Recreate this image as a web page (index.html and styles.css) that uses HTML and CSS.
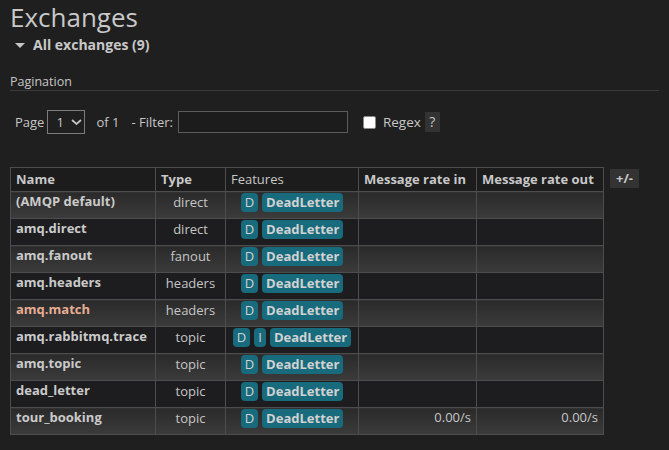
FILE: index.html
```html
<!DOCTYPE html>
<html>
<head>
<meta charset="utf-8">
<link rel="stylesheet" href="styles.css">
</head>
<body>
<div class="page">
  <h1 class="title">Exchanges</h1>
  <div class="section-head"><span class="tri"></span><span>All exchanges (9)</span></div>
  <h3 class="pag-label">Pagination</h3>
  <div class="pager">
    <span>Page</span>
    <div class="select"><span>1</span><svg class="chev" width="11" height="6" viewBox="0 0 11 6"><polyline points="1,1 5.5,5 10,1" fill="none" stroke="#c6c6c6" stroke-width="1.7"/></svg></div>
    <span class="of">of 1</span>
    <span class="filter-label">- Filter:</span>
    <span class="input"></span>
    <span class="checkbox"></span>
    <span class="regex">Regex</span>
    <span class="help">?</span>
  </div>
  <div class="table-wrap">
    <table class="list">
      <colgroup><col class="c-name"><col class="c-type"><col class="c-feat"><col class="c-in"><col class="c-out"></colgroup>
      <thead>
        <tr><th class="l">Name</th><th class="l">Type</th><th class="l plain">Features</th><th class="l">Message rate in</th><th class="l">Message rate out</th></tr>
      </thead>
      <tbody>
        <tr class="alt1"><td class="name">(AMQP default)</td><td class="c">direct</td><td class="c"><span class="feats"><span class="badge">D</span><span class="badge b">DeadLetter</span></span></td><td></td><td></td></tr>
        <tr class="alt2"><td class="name">amq.direct</td><td class="c">direct</td><td class="c"><span class="feats"><span class="badge">D</span><span class="badge b">DeadLetter</span></span></td><td></td><td></td></tr>
        <tr class="alt1"><td class="name">amq.fanout</td><td class="c">fanout</td><td class="c"><span class="feats"><span class="badge">D</span><span class="badge b">DeadLetter</span></span></td><td></td><td></td></tr>
        <tr class="alt2"><td class="name">amq.headers</td><td class="c">headers</td><td class="c"><span class="feats"><span class="badge">D</span><span class="badge b">DeadLetter</span></span></td><td></td><td></td></tr>
        <tr class="alt1"><td class="name hl">amq.match</td><td class="c">headers</td><td class="c"><span class="feats"><span class="badge">D</span><span class="badge b">DeadLetter</span></span></td><td></td><td></td></tr>
        <tr class="alt2"><td class="name">amq.rabbitmq.trace</td><td class="c">topic</td><td class="c"><span class="feats"><span class="badge">D</span><span class="badge">I</span><span class="badge b">DeadLetter</span></span></td><td></td><td></td></tr>
        <tr class="alt1"><td class="name">amq.topic</td><td class="c">topic</td><td class="c"><span class="feats"><span class="badge">D</span><span class="badge b">DeadLetter</span></span></td><td></td><td></td></tr>
        <tr class="alt2"><td class="name">dead_letter</td><td class="c">topic</td><td class="c"><span class="feats"><span class="badge">D</span><span class="badge b">DeadLetter</span></span></td><td></td><td></td></tr>
        <tr class="alt1"><td class="name">tour_booking</td><td class="c">topic</td><td class="c"><span class="feats"><span class="badge">D</span><span class="badge b">DeadLetter</span></span></td><td class="r">0.00/s</td><td class="r">0.00/s</td></tr>
      </tbody>
    </table>
    <span class="toggle">+/-</span>
  </div>
</div>
</body>
</html>
```

FILE: styles.css
```css
html, body {
  margin: 0;
  padding: 0;
  background: #1f1f1f;
  color: #c6c6c6;
  font-family: "Open Sans", "DejaVu Sans", sans-serif;
  font-size: 13px;
}

.page {
  padding: 2px 10px 0 10px;
}

.title {
  margin: 0;
  font-size: 26px;
  line-height: 30px;
  font-weight: 400;
  color: #c8c8c8;
}

.section-head {
  margin-top: 4px;
  height: 18px;
  line-height: 18px;
  display: flex;
  align-items: center;
  padding-left: 5px;
  font-weight: 700;
  font-size: 14px;
  color: #c8c8c8;
}

.tri {
  width: 0;
  height: 0;
  border-left: 5.5px solid transparent;
  border-right: 5.5px solid transparent;
  border-top: 5px solid #c6c6c6;
  margin-right: 8px;
}

.pag-label {
  margin: 20px 0 0 0;
  font-size: 12.5px;
  line-height: 16px;
  font-weight: 400;
  border-bottom: 1px solid #3a3a3a;
}

.pager {
  margin-top: 19px;
  height: 24px;
  display: flex;
  align-items: center;
  padding-left: 5px;
}

.select {
  margin-left: 3px;
  box-sizing: border-box;
  width: 38px;
  height: 24px;
  border: 1px solid #7c7c7c;
  display: flex;
  align-items: center;
  padding-left: 8px;
}

.chev {
  margin-left: 7px;
}

.of { margin-left: 11px; }
.filter-label { margin-left: 12px; }

.input {
  margin-left: 5px;
  box-sizing: border-box;
  width: 170px;
  height: 22px;
  border: 1px solid #5c5c5c;
  background: #1c1c1c;
}

.checkbox {
  margin-left: 15px;
  box-sizing: border-box;
  width: 13px;
  height: 13px;
  background: #ffffff;
  border: 1px solid #8a8a8a;
  border-radius: 2px;
}

.regex { margin-left: 7px; font-size: 13.5px; }

.help {
  margin-left: 4px;
  width: 15px;
  height: 20px;
  line-height: 20px;
  text-align: center;
  background: #333333;
  font-size: 14px;
}

.table-wrap {
  margin-top: 33px;
  display: flex;
  align-items: flex-start;
  gap: 6px;
}

.list {
  border-collapse: collapse;
  table-layout: fixed;
  width: 593px;
}

.c-name { width: 145px; }
.c-type { width: 70px; }
.c-feat { width: 133px; }
.c-in { width: 118px; }
.c-out { width: 127px; }

.list th, .list td {
  border: 1px solid #4d4d4d;
  white-space: nowrap;
  overflow: hidden;
}

.list th {
  background: #1c1c1c;
  padding: 0 5px;
  line-height: 23px;
  font-weight: 700;
  font-size: 13px;
  text-align: left;
  color: #c8c8c8;
}

.list th.plain {
  font-weight: 400;
}

.list td {
  padding: 0 5px 7px 5px;
  line-height: 19px;
  vertical-align: top;
}

.list td.c {
  padding-top: 1px;
  padding-bottom: 6px;
}

.alt1 td {
  background: linear-gradient(#2a2a2a, #3b3b3b);
}

.alt2 td {
  background: #1d1d20;
}

.name {
  font-weight: 700;
  color: #cacaca;
}

.hl {
  color: #e6ad92;
}

.c { text-align: center; }
.r { text-align: right; }

.feats {
  display: inline-flex;
  gap: 4px;
  vertical-align: top;
}

.badge {
  display: inline-block;
  height: 19px;
  line-height: 19px;
  padding: 0 4px;
  border-radius: 4px;
  background: #186b7c;
  color: #d2d2d2;
}

.badge.b {
  font-weight: 700;
}

.toggle {
  margin-top: 2px;
  width: 29px;
  height: 19px;
  line-height: 19px;
  text-align: center;
  background: #333333;
  color: #c8c8c8;
  font-weight: 700;
}
```
